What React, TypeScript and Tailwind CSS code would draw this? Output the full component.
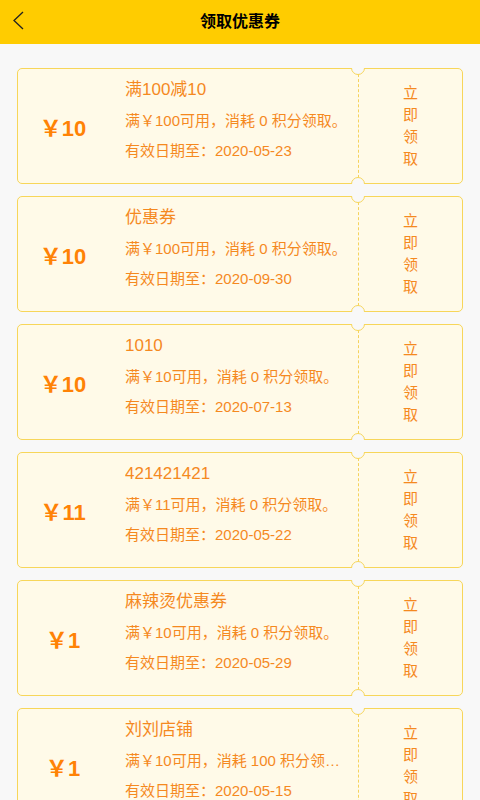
import React from "react";

type Coupon = { price: string; title: string; desc: string; date: string };

const coupons: Coupon[] = [
  { price: "10", title: "满100减10", desc: "满￥100可用，消耗 0 积分领取。", date: "2020-05-23" },
  { price: "10", title: "优惠券", desc: "满￥100可用，消耗 0 积分领取。", date: "2020-09-30" },
  { price: "10", title: "1010", desc: "满￥10可用，消耗 0 积分领取。", date: "2020-07-13" },
  { price: "11", title: "421421421", desc: "满￥11可用，消耗 0 积分领取。", date: "2020-05-22" },
  { price: "1", title: "麻辣烫优惠券", desc: "满￥10可用，消耗 0 积分领取。", date: "2020-05-29" },
  { price: "1", title: "刘刘店铺", desc: "满￥10可用，消耗 100 积分领取。", date: "2020-05-15" },
];

function Notch({ pos }: { pos: "top" | "bottom" }) {
  if (pos === "top") {
    return (
      <>
        <div className="absolute left-[333px] top-[-8px] h-[14px] w-[14px] rounded-full border border-[#f7d65a] bg-[#f8f8f8]" />
        <div className="absolute left-[332px] top-[-9px] h-[8px] w-[16px] bg-[#f8f8f8]" />
      </>
    );
  }
  return (
    <>
      <div className="absolute left-[333px] bottom-[-8px] h-[14px] w-[14px] rounded-full border border-[#f7d65a] bg-[#f8f8f8]" />
      <div className="absolute left-[332px] bottom-[-9px] h-[8px] w-[16px] bg-[#f8f8f8]" />
    </>
  );
}

function CouponCard({ c }: { c: Coupon }) {
  return (
    <div className="relative flex h-[116px] rounded-[5px] border border-[#f7d65a] bg-[#fffae8]">
      <div className="flex w-[90px] shrink-0 items-center justify-center pt-[4px] text-[22px] font-bold text-[#ff8205]">
        <span>￥{c.price}</span>
      </div>
      <div className="ml-[17px] w-[224px] shrink-0 overflow-hidden pt-[9px] text-[#f5891f]">
        <div className="truncate text-[17px] leading-[24px]">{c.title}</div>
        <div className="mt-[4px] truncate text-[15px] leading-[30px]">{c.desc}</div>
        <div className="truncate text-[15px] leading-[30px]">有效日期至：{c.date}</div>
      </div>
      <div className="ml-[9px] flex flex-1 items-center justify-center border-l border-dashed border-[#f5d25e]">
        <div className="flex flex-col items-center text-[15px] leading-[22px] text-[#f5891f]">
          <span>立</span>
          <span>即</span>
          <span>领</span>
          <span>取</span>
        </div>
      </div>
      <Notch pos="top" />
      <Notch pos="bottom" />
    </div>
  );
}

export default function App() {
  return (
    <div
      className="min-h-[800px] bg-[#f8f8f8]"
      style={{ fontFamily: '"Liberation Sans", "Noto Sans CJK SC", sans-serif' }}
    >
      <div className="relative flex h-[44px] items-center justify-center bg-[#ffcc00]">
        <svg className="absolute left-[12px] top-[11px]" width="14" height="20" viewBox="0 0 14 20">
          <polyline points="11,1 2,9.5 11,18" fill="none" stroke="#222" strokeWidth="1.3" />
        </svg>
        <span className="text-[16px] font-bold text-black">领取优惠券</span>
      </div>
      <div className="flex flex-col gap-[12px] px-[17px] pt-[24px] pb-[12px]">
        {coupons.map((c, i) => (
          <CouponCard key={i} c={c} />
        ))}
      </div>
    </div>
  );
}
